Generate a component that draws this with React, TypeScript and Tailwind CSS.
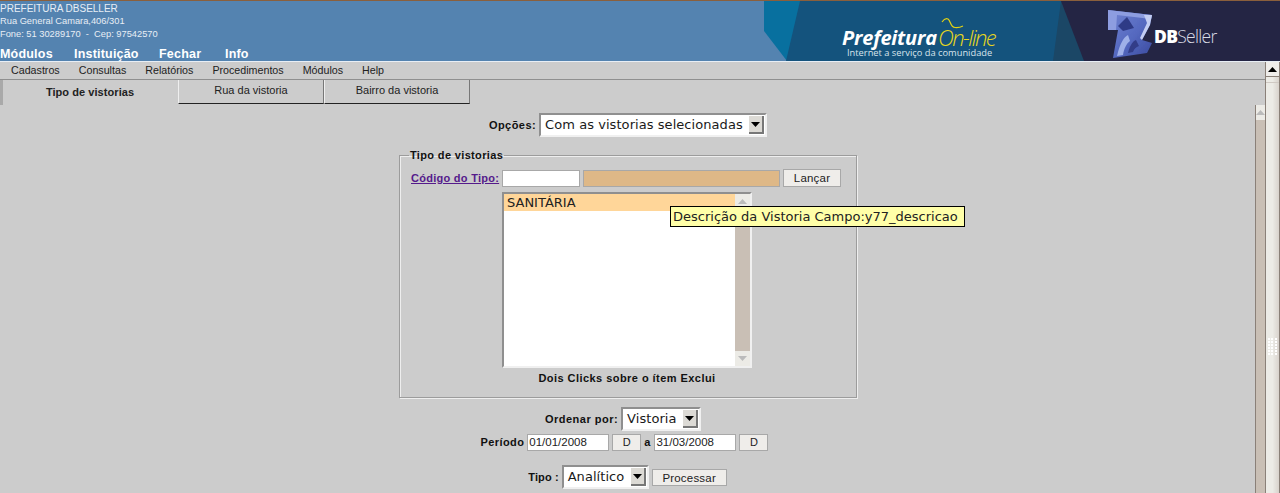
const arial = "font-['Liberation_Sans',Arial,sans-serif]";
const dejavu = "font-['DejaVu_Sans',Verdana,sans-serif]";

function Arrow({ up = false, color = "#000" }: { up?: boolean; color?: string }) {
  return (
    <svg width="9" height="5" viewBox="0 0 9 5">
      <path d={up ? "M4.5 0 L9 5 L0 5 Z" : "M0 0 L9 0 L4.5 5 Z"} fill={color} />
    </svg>
  );
}

function Banner() {
  return (
    <div className="relative w-[516px] h-[60px] shrink-0 overflow-hidden">
      <svg width="516" height="60" viewBox="0 0 516 60" className="block">
        <defs>
          <linearGradient id="cube" x1="0" y1="0" x2="1" y2="1">
            <stop offset="0" stopColor="#7385d2" />
            <stop offset="0.55" stopColor="#5569c0" />
            <stop offset="1" stopColor="#3a4a9e" />
          </linearGradient>
          <filter id="soft">
            <feGaussianBlur stdDeviation="0.6" />
          </filter>
        </defs>
        <rect width="516" height="60" fill="#5483b0" />
        <polygon points="0,0 516,0 516,60 23,60 0,30" fill="#08709f" />
        <polygon points="36,0 516,0 516,60 22,60" fill="#14537d" />
        <polygon points="297,0 516,0 516,60 289,60" fill="#1b4766" />
        <polygon points="297,0 516,0 516,60 320,60" fill="#242544" />
        <g filter="url(#soft)">
          <polygon points="344,9 388,14 386,24 378,39 388,42 383,52 349,57 354,29 344,29" fill="url(#cube)" />
          <polygon points="344,9 388,14 387,18 353,14 352,29 344,29" fill="#8d9de0" />
          <polygon points="354,25 363,16 370,27 359,30" fill="#2f3a86" />
          <path d="M353 55 C 356 42, 360 36, 364 34 L 366 40 C 362 43, 360 48, 359 54 Z" fill="#9fb0e8" />
          <path d="M364 52 C 366 44, 369 40, 372 39 L 375 45 C 372 46, 370 48, 369 51 Z" fill="#323c88" />
          <polygon points="380,14 388,14 386,24 378,39 376,37 383,22" fill="#c3cdf2" />
        </g>
        <path d="M178 21 C 180 18, 182 17, 184 18 C 187 20, 186 26, 191 26.5 C 194 26.8, 197 26, 199 25" stroke="#e3d213" strokeWidth="1.2" fill="none" />
      </svg>
      <span className="absolute left-[78px] top-[28px] text-[20px] leading-[18px] font-bold italic text-white font-['Open_Sans',sans-serif] tracking-[-0.2px]">
        Prefeitura
      </span>
      <span className="absolute left-[174px] top-[27px] text-[22px] leading-[18px] italic text-[#e9d81c] font-['Open_Sans',sans-serif] tracking-[-1.6px] font-light">
        On-line
      </span>
      <span className="absolute left-[83px] top-[46px] text-[9.3px] leading-[12px] text-[#d8e4ec] font-['Open_Sans',sans-serif] whitespace-nowrap">
        Internet a serviço da comunidade
      </span>
      <span className="absolute left-[390px] top-[24px] text-[17.5px] leading-[22px] text-white font-['Open_Sans',sans-serif] tracking-[-0.7px]">
        <b className="font-extrabold">DB</b>
        <span className="font-light text-[#d9dbe6]">Seller</span>
      </span>
    </div>
  );
}

function NativeSelect({ label, className }: { label: string; className: string }) {
  return (
    <div
      className={`${className} ${dejavu} h-[24px] flex items-center justify-between bg-white border-2 border-t-[#8f8f8f] border-l-[#8f8f8f] border-r-[#f0f0f0] border-b-[#f0f0f0] text-[13px] text-[#1a1a1a] pl-[4px] pr-[1px] whitespace-nowrap font-normal tracking-[0.06px]`}
    >
      <span>{label}</span>
      <span className="w-[15px] h-[18px] bg-[#dcdad5] border-r-2 border-b-2 border-r-[#777] border-b-[#777] flex items-center justify-center">
        <Arrow />
      </span>
    </div>
  );
}

function DateButton() {
  return (
    <button className={`${arial} w-[29px] h-[17px] bg-[#efedea] border border-[#a8a8a8] text-[11px] font-normal leading-none text-[#222]`}>
      D
    </button>
  );
}

function DateInput({ value }: { value: string }) {
  return (
    <div className={`${arial} w-[82px] h-[17px] bg-white border border-[#a8a8a8] text-[11.5px] font-normal leading-[15px] pl-[1px] text-[#222]`}>
      {value}
    </div>
  );
}

export default function App() {
  const menu = [
    { label: "Módulos", width: "w-[74px]" },
    { label: "Instituição", width: "w-[85px]" },
    { label: "Fechar", width: "w-[66px]" },
    { label: "Info", width: "w-[40px]" },
  ];
  const subMenu = ["Cadastros", "Consultas", "Relatórios", "Procedimentos", "Módulos", "Help"];

  return (
    <div className={`${arial} w-[1280px] h-[493px] overflow-hidden bg-[#cccccc] flex flex-col`}>
      <header className="h-[61px] shrink-0 border-t border-[#8a5f3c] bg-[#5483b0] flex justify-between">
        <div className="text-[#e8eef5] pt-[1px]">
          <div className="text-[10px] leading-[13px]">PREFEITURA DBSELLER</div>
          <div className="text-[9.3px] leading-[13px]">Rua General Camara,406/301</div>
          <div className="text-[9.3px] leading-[13px] whitespace-pre">Fone: 51 30289170  -  Cep: 97542570</div>
          <div className="flex text-[12.5px] font-bold leading-[14px] text-white mt-[6px] tracking-[0.2px]">
            {menu.map((m, i) => (
              <span key={i} className={m.width}>{m.label}</span>
            ))}
          </div>
        </div>
        <Banner />
      </header>

      <div className="flex-1 flex min-h-0 border-t border-[#e8eef5]">
        <div className="flex-1 flex flex-col min-w-0">
          <nav className="h-[18px] shrink-0 flex gap-[19px] pl-[11px] items-center text-[10.7px] text-[#222] border-b border-[#8f8f8f]">
            {subMenu.map((s, i) => (
              <span key={i}>{s}</span>
            ))}
          </nav>

          <div className="h-[25px] shrink-0 flex text-[11px] text-[#222]">
            <div className="w-[178px] h-[25px] flex items-center justify-center font-bold text-[11px] tracking-[0.06px] border-l-[3px] border-[#a9a9a9] pr-[1px]">
              Tipo de vistorias
            </div>
            <div className="w-[146px] h-[24px] flex items-center justify-center border-l border-r border-b border-l-[#efefef] border-r-[#777] border-b-[#222] pb-[3px]">
              Rua da vistoria
            </div>
            <div className="w-[146px] h-[24px] flex items-center justify-center border-l border-r border-b border-l-[#efefef] border-r-[#777] border-b-[#222] pb-[3px]">
              Bairro da vistoria
            </div>
          </div>

          <div className="flex-1 flex min-h-0">
            <main className="flex-1 flex flex-col items-center pt-[8px] text-[11px] text-[#111] min-w-0">
              <div className="flex items-center gap-[3px] font-bold tracking-[0.45px] ml-[1px]">
                <span>Opções:</span>
                <NativeSelect label="Com as vistorias selecionadas" className="w-[228px]" />
              </div>

              <fieldset className="relative w-[458px] h-[249px] mt-[12px] border border-[#9c9c9c] shadow-[1px_1px_0_#eee,inset_1px_1px_0_#eee] pl-[11px] pr-[14px] ml-[1px]">
                <legend className="font-bold px-[1px] ml-[-2px] leading-[13px] tracking-[0.35px]">Tipo de vistorias</legend>
                <div className="flex items-center mt-[7px] h-[18px]">
                  <a className="text-[#551a8b] underline font-bold w-[91px] tracking-[0.27px]">Código do Tipo:</a>
                  <div className="w-[78px] h-[17px] bg-white border border-[#a8a8a8]" />
                  <div className="w-[197px] h-[17px] ml-[3px] bg-[#deb887] border border-[#a8a8a8]" />
                  <button className={`${arial} ml-[3px] w-[58px] h-[18px] bg-[#efedea] border border-[#a8a8a8] text-[11.5px] text-[#222] tracking-[0.2px]`}>
                    Lançar
                  </button>
                </div>

                <div className="ml-[91px] mt-[5px] w-[250px] h-[176px] flex bg-white border-2 border-t-[#8f8f8f] border-l-[#8f8f8f] border-r-[#f0f0f0] border-b-[#f0f0f0]">
                  <div className={`${dejavu} flex-1 text-[13px] leading-[17px] text-[#222]`}>
                    <div className="bg-[#ffd699] pl-[3px] h-[17px]">SANITÁRIA</div>
                  </div>
                  <div className="w-[15px] flex flex-col bg-[#c9bfb5]">
                    <div className="h-[15px] bg-[#ecebe6] flex items-center justify-center"><Arrow up color="#bbb" /></div>
                    <div className="flex-1" />
                    <div className="h-[15px] bg-[#ecebe6] flex items-center justify-center"><Arrow color="#bbb" /></div>
                  </div>
                </div>

                <p className="font-bold text-center mt-[2px] ml-[1px] tracking-[0.45px]">Dois Clicks sobre o ítem Exclui</p>

                <div className={`${dejavu} absolute left-[270px] top-[44px] h-[21px] flex items-center pl-[2px] pr-[6px] bg-[#ffffa8] border border-black text-[13px] font-normal text-[#222] whitespace-nowrap`}>
                  Descrição da Vistoria Campo:y77_descricao
                </div>
              </fieldset>

              <div className="flex items-center gap-[3px] font-bold mt-[9px] mr-[9px] tracking-[0.5px]">
                <span>Ordenar por:</span>
                <NativeSelect label="Vistoria" className="w-[80px]" />
              </div>

              <div className="flex items-center mt-[3px] font-bold ml-[-6px]">
                <span className="mr-[3px] tracking-[0.4px]">Período</span>
                <DateInput value="01/01/2008" />
                <span className="ml-[3px]"><DateButton /></span>
                <span className="ml-[3px] mr-[4px]">a</span>
                <DateInput value="31/03/2008" />
                <span className="ml-[3px]"><DateButton /></span>
              </div>

              <div className="flex items-center font-bold mt-[14px]">
                <span className="mr-[3px] tracking-[0.1px]">Tipo :</span>
                <NativeSelect label="Analítico" className="w-[87px]" />
                <button className={`${arial} ml-[3px] w-[75px] h-[17px] bg-[#efedea] border border-[#a8a8a8] font-normal text-[11.5px] text-[#222] tracking-[0.2px]`}>
                  Processar
                </button>
              </div>
            </main>

            <div className="w-[10px] shrink-0 flex flex-col bg-[#c9bfb5] border-l border-[#8a8078]">
              <div className="h-[15px] bg-[#ecebe6] flex items-center justify-center"><Arrow up color="#bbb" /></div>
            </div>
          </div>
        </div>

        <aside className="w-[15px] shrink-0 flex flex-col bg-gradient-to-r from-[#ecebe6] via-[#ecebe6] to-[#d8d2cc] border-x border-[#8a8078]">
          <div className="h-[15px] bg-[#efedea] border-b border-[#8a8078] flex items-center justify-center"><Arrow up /></div>
          <div className="h-[6px] border-b border-[#cfc9c3]" />
          <div className="mt-[255px] mx-auto w-[9px] h-[17px] grid grid-cols-3 gap-[1px]">
            {Array.from({ length: 18 }).map((_, i) => (
              <span key={i} className="w-[2px] h-[2px] bg-white" />
            ))}
          </div>
        </aside>
      </div>
    </div>
  );
}
